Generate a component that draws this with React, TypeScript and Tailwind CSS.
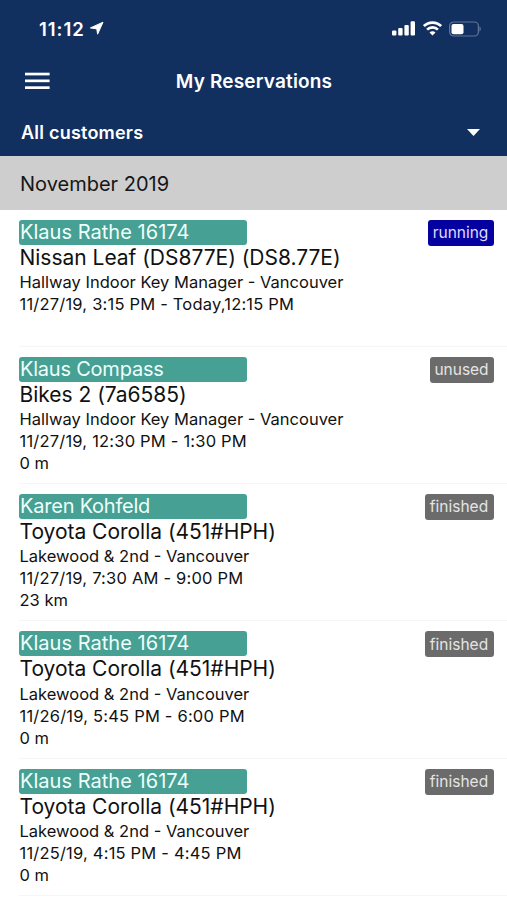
import React, { useState } from "react";

interface Reservation {
  id: number;
  customer: string;
  vehicle: string;
  location: string;
  period: string;
  distance?: string;
  status: "running" | "unused" | "finished";
}

const reservations: Reservation[] = [
  {
    id: 1,
    customer: "Klaus Rathe 16174",
    vehicle: "Nissan Leaf (DS877E) (DS8.77E)",
    location: "Hallway Indoor Key Manager - Vancouver",
    period: "11/27/19, 3:15 PM - Today,12:15 PM",
    status: "running",
  },
  {
    id: 2,
    customer: "Klaus Compass",
    vehicle: "Bikes 2 (7a6585)",
    location: "Hallway Indoor Key Manager - Vancouver",
    period: "11/27/19, 12:30 PM - 1:30 PM",
    distance: "0 m",
    status: "unused",
  },
  {
    id: 3,
    customer: "Karen Kohfeld",
    vehicle: "Toyota Corolla (451#HPH)",
    location: "Lakewood & 2nd - Vancouver",
    period: "11/27/19, 7:30 AM - 9:00 PM",
    distance: "23 km",
    status: "finished",
  },
  {
    id: 4,
    customer: "Klaus Rathe 16174",
    vehicle: "Toyota Corolla (451#HPH)",
    location: "Lakewood & 2nd - Vancouver",
    period: "11/26/19, 5:45 PM - 6:00 PM",
    distance: "0 m",
    status: "finished",
  },
  {
    id: 5,
    customer: "Klaus Rathe 16174",
    vehicle: "Toyota Corolla (451#HPH)",
    location: "Lakewood & 2nd - Vancouver",
    period: "11/25/19, 4:15 PM - 4:45 PM",
    distance: "0 m",
    status: "finished",
  },
];

const statusStyles = {
  running: "w-[66px] bg-[#0500a0] text-[#dcdcff]",
  unused: "w-[64px] bg-[#6b6b6b] text-[#e4e4e4]",
  finished: "w-[69px] bg-[#6b6b6b] text-[#e4e4e4]",
};

const StatusBar: React.FC = () => (
  <div className="flex h-[56px] items-center justify-between pl-[39px] pr-[26px] pt-px">
    <div className="flex items-center gap-[4px]">
      <span className="text-[18.5px] font-semibold leading-6 tracking-[0.95px]">11:12</span>
      <svg width="15" height="15" viewBox="0 0 15 15" fill="white" stroke="white" strokeLinejoin="round">
        <path d="M14 1.2 8.6 13.2 7.8 7.9 1.4 6.9z" />
      </svg>
    </div>
    <div className="flex items-center gap-[7px]">
      {/* Signal */}
      <svg width="24" height="15" viewBox="0 0 24 15" fill="white">
        <rect x="0" y="9.4" width="4.4" height="5.2" rx="1.1" />
        <rect x="6.2" y="6.9" width="4.4" height="7.7" rx="1.1" />
        <rect x="12.4" y="4" width="4.4" height="10.6" rx="1.1" />
        <rect x="18.6" y="0.3" width="4.4" height="14.3" rx="1.1" />
      </svg>
      {/* Wifi */}
      <svg width="19" height="15" viewBox="0 0 19 15" fill="none" stroke="white" strokeWidth="2.7">
        <path d="M.9 5.1a12.2 12.2 0 0 1 17.2 0" />
        <path d="M4.1 8.6a7.7 7.7 0 0 1 10.8 0" />
        <path d="M9.5 14.5 6.5 11.4a4.2 4.2 0 0 1 6 0z" fill="white" stroke="none" />
      </svg>
      {/* Battery */}
      <svg width="32" height="16" viewBox="0 0 32 16" fill="none">
        <rect x=".6" y="1" width="28.8" height="14" rx="4" stroke="#607497" strokeWidth="1.2" />
        <rect x="2.5" y="2.9" width="12" height="10.3" rx="2" fill="white" />
        <path d="M30.6 5.6c1.3.6 1.3 4.2 0 4.8z" fill="#8494af" />
      </svg>
    </div>
  </div>
);

const ReservationRow: React.FC<{ item: Reservation }> = ({ item }) => (
  <li className="flex h-[137.25px] flex-col">
    <div className="flex min-h-0 flex-1 items-start justify-between pl-[19px] pr-[13.5px] pt-[10px] text-[#111]">
      <div className="whitespace-nowrap">
        <h3
          className={`h-[25px] w-[228px] rounded-[3px] bg-[#46a093] pl-px text-[20px] leading-[25.5px] text-[#eefffc] ${
            /\d/.test(item.customer) ? "tracking-[0.03px]" : "tracking-[-0.22px]"
          }`}
        >
          {item.customer}
        </h3>
        <p className="pl-[0.5px] text-[21px] leading-[26.25px] tracking-[-0.02px]">{item.vehicle}</p>
        <p className="pl-[0.5px] text-[16.5px] leading-[22px]">{item.location}</p>
        <p className="pl-[0.5px] text-[16.5px] leading-[22px] tracking-[0.2px]">{item.period}</p>
        {item.distance && <p className="pl-[0.5px] text-[16.5px] leading-[22px]">{item.distance}</p>}
      </div>
      <span
        className={`flex h-[26px] items-center justify-center rounded-[3px] text-[15.5px] ${statusStyles[item.status]}`}
      >
        {item.status}
      </span>
    </div>
    <div className="ml-[19px] h-px bg-[#f6f6f6]" />
  </li>
);

const App: React.FC = () => {
  const [menuOpen, setMenuOpen] = useState(false);

  return (
    <div className="h-[900px] w-[507px] overflow-hidden bg-white font-['Inter',sans-serif]">
      <header className="h-[156px] bg-[#12305f] text-white">
        <StatusBar />

        {/* Title bar */}
        <div className="grid h-[50px] grid-cols-[50px_1fr_49px] items-center">
          <button
            aria-label="Menu"
            aria-expanded={menuOpen}
            onClick={() => setMenuOpen(!menuOpen)}
            className="pl-[25px]"
          >
            <svg width="25" height="18" viewBox="0 0 25 18" fill="white">
              <rect y=".7" width="24.6" height="2.7" />
              <rect y="7.5" width="24.6" height="2.7" />
              <rect y="14.3" width="24.6" height="2.7" />
            </svg>
          </button>
          <h1 className="pt-[2px] text-center text-[19px] font-semibold leading-6 tracking-[0.18px]">
            My Reservations
          </h1>
        </div>

        {/* Customer filter */}
        <div className="flex h-[50px] items-center justify-between pl-[21px] pr-[27px] pt-[3px]">
          <span className="text-[18px] font-semibold leading-6 tracking-[0.22px]">All customers</span>
          <svg width="13" height="7" viewBox="0 0 13 7" fill="white">
            <path d="M0 0h13L6.5 7z" />
          </svg>
        </div>
      </header>

      <h2 className="h-[53.5px] bg-[#cecece] pl-[20px] text-[20px] leading-[56px] text-[#161616]">
        November 2019
      </h2>

      <ul>
        {reservations.map((item) => (
          <ReservationRow key={item.id} item={item} />
        ))}
      </ul>
    </div>
  );
};

export default App;
